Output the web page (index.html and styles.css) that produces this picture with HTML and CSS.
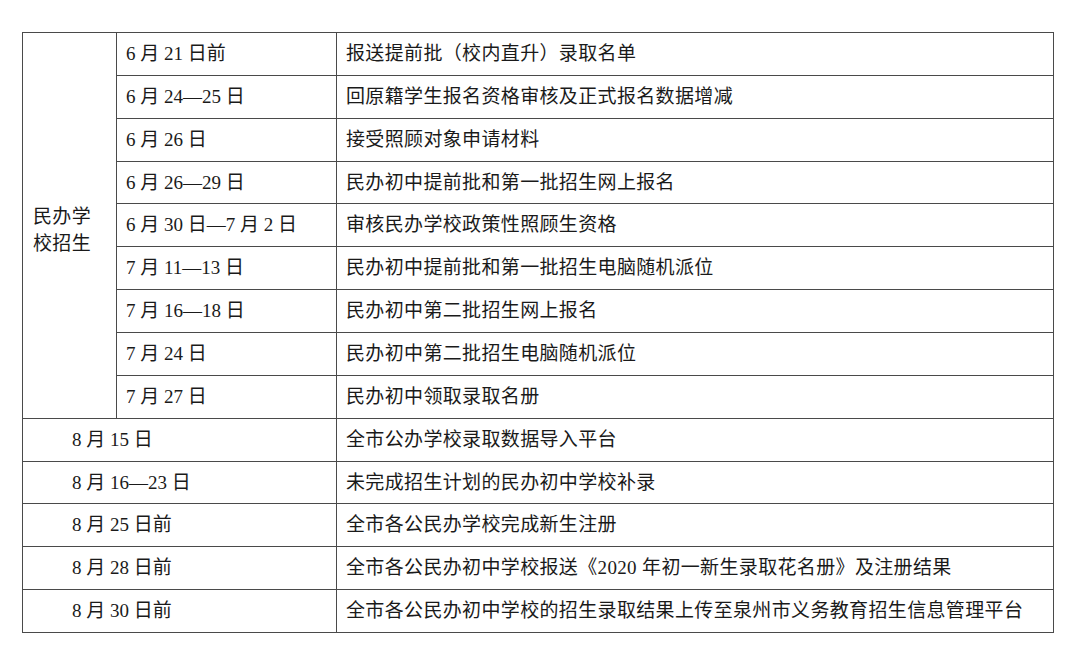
FILE: index.html
```html
<!DOCTYPE html>
<html lang="zh-CN">
<head>
<meta charset="utf-8">
<title>招生时间安排</title>
<link rel="stylesheet" href="styles.css">
</head>
<body>
<div class="page">
<table class="sched">
  <colgroup>
    <col class="c1"><col class="c2"><col class="c3">
  </colgroup>
  <tbody>
    <tr><td class="grp" rowspan="9">民办学<br>校招生</td><td>6 月 21 日前</td><td class="desc">报送提前批（校内直升）录取名单</td></tr>
    <tr><td>6 月 24—25 日</td><td class="desc">回原籍学生报名资格审核及正式报名数据增减</td></tr>
    <tr><td>6 月 26 日</td><td class="desc">接受照顾对象申请材料</td></tr>
    <tr><td>6 月 26—29 日</td><td class="desc">民办初中提前批和第一批招生网上报名</td></tr>
    <tr><td>6 月 30 日—7 月 2 日</td><td class="desc">审核民办学校政策性照顾生资格</td></tr>
    <tr><td>7 月 11—13 日</td><td class="desc">民办初中提前批和第一批招生电脑随机派位</td></tr>
    <tr><td>7 月 16—18 日</td><td class="desc">民办初中第二批招生网上报名</td></tr>
    <tr><td>7 月 24 日</td><td class="desc">民办初中第二批招生电脑随机派位</td></tr>
    <tr><td>7 月 27 日</td><td class="desc">民办初中领取录取名册</td></tr>
    <tr><td class="wide" colspan="2">8 月 15 日</td><td class="desc">全市公办学校录取数据导入平台</td></tr>
    <tr><td class="wide" colspan="2">8 月 16—23 日</td><td class="desc">未完成招生计划的民办初中学校补录</td></tr>
    <tr><td class="wide" colspan="2">8 月 25 日前</td><td class="desc">全市各公民办学校完成新生注册</td></tr>
    <tr><td class="wide" colspan="2">8 月 28 日前</td><td class="desc">全市各公民办初中学校报送《2020 年初一新生录取花名册》及注册结果</td></tr>
    <tr><td class="wide" colspan="2">8 月 30 日前</td><td class="desc">全市各公民办初中学校的招生录取结果上传至泉州市义务教育招生信息管理平台</td></tr>
  </tbody>
</table>
</div>
</body>
</html>
```
FILE: styles.css
```css
html, body {
  margin: 0;
  padding: 0;
  background: #ffffff;
}
.page {
  padding: 32px 0 0 22px;
}
.sched {
  border-collapse: collapse;
  table-layout: fixed;
  width: 1031px;
  font-family: "Liberation Serif", "Noto Sans CJK SC", serif;
  font-size: 19px;
  color: #1a1a1a;
}
.c1 { width: 94px; }
.c2 { width: 220px; }
.c3 { width: 717px; }
.sched tr {
  height: 42.86px;
}
.sched td {
  border: 1px solid #4a4a4a;
  padding: 0 0 0 9px;
  line-height: 24px;
  white-space: nowrap;
  vertical-align: middle;
}
.sched td.desc {
  letter-spacing: 0.35px;
}
.sched td.grp {
  padding-left: 10px;
  line-height: 27px;
  letter-spacing: 0.35px;
  white-space: normal;
  padding-top: 10px;
}
.sched td.wide {
  padding-left: 49px;
}
```
